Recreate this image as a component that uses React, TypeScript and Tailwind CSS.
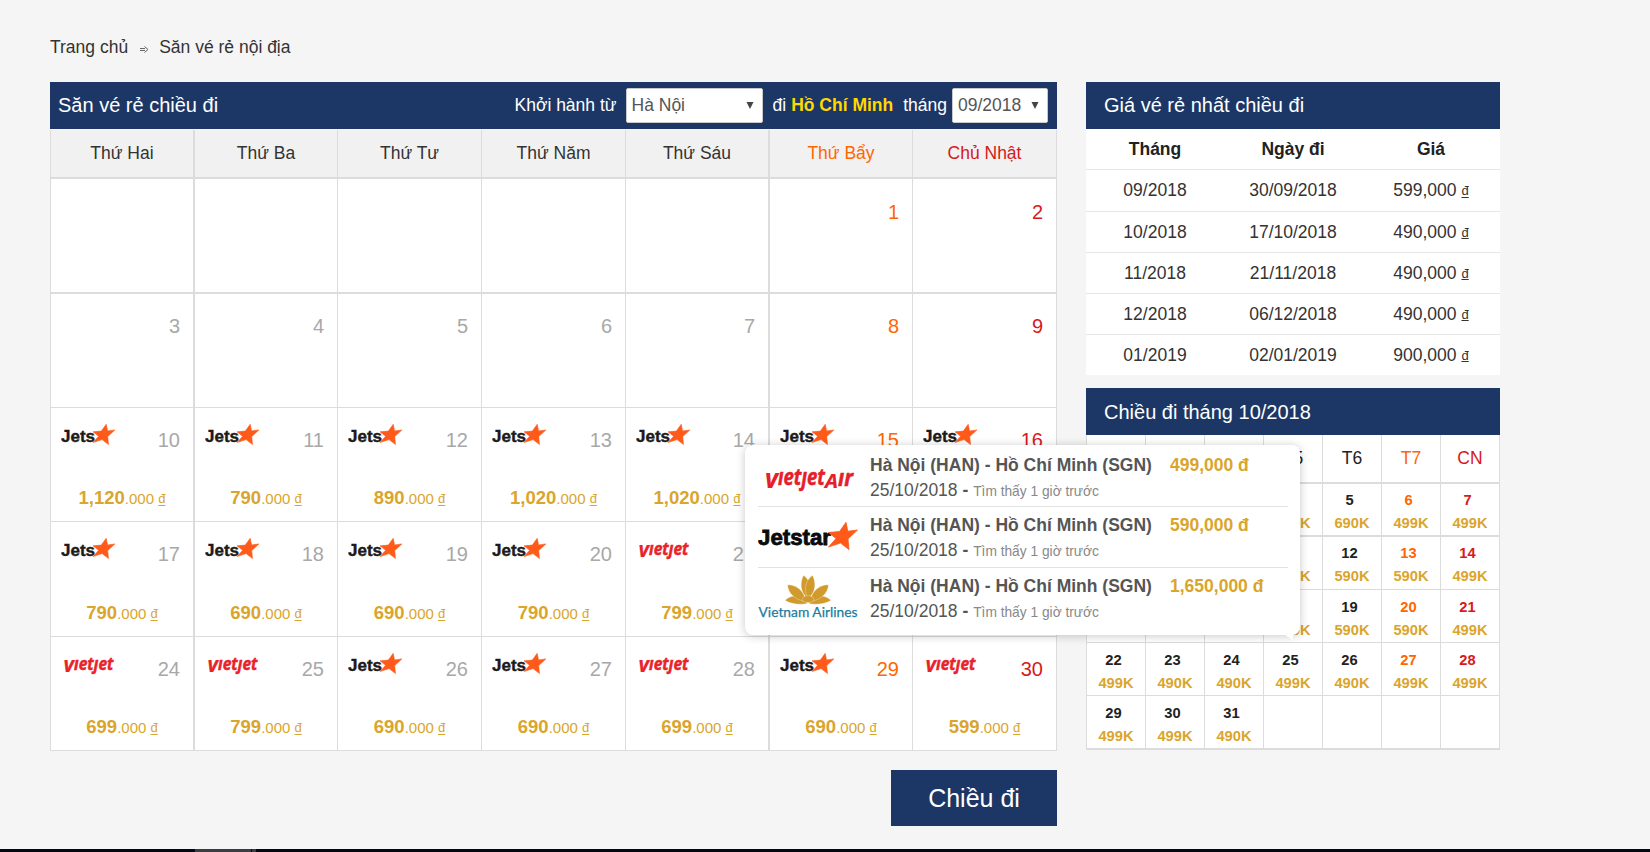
import React from "react";

type Airline = "jetstar" | "vietjet";
type Day = { day: number; airline?: Airline; price?: string } | null;

const weeks: Day[][] = [
  [null, null, null, null, null, { day: 1 }, { day: 2 }],
  [{ day: 3 }, { day: 4 }, { day: 5 }, { day: 6 }, { day: 7 }, { day: 8 }, { day: 9 }],
  [
    { day: 10, airline: "jetstar", price: "1,120" },
    { day: 11, airline: "jetstar", price: "790" },
    { day: 12, airline: "jetstar", price: "890" },
    { day: 13, airline: "jetstar", price: "1,020" },
    { day: 14, airline: "jetstar", price: "1,020" },
    { day: 15, airline: "jetstar" },
    { day: 16, airline: "jetstar" },
  ],
  [
    { day: 17, airline: "jetstar", price: "790" },
    { day: 18, airline: "jetstar", price: "690" },
    { day: 19, airline: "jetstar", price: "690" },
    { day: 20, airline: "jetstar", price: "790" },
    { day: 21, airline: "vietjet", price: "799" },
    null,
    null,
  ],
  [
    { day: 24, airline: "vietjet", price: "699" },
    { day: 25, airline: "vietjet", price: "799" },
    { day: 26, airline: "jetstar", price: "690" },
    { day: 27, airline: "jetstar", price: "690" },
    { day: 28, airline: "vietjet", price: "699" },
    { day: 29, airline: "jetstar", price: "690" },
    { day: 30, airline: "vietjet", price: "599" },
  ],
];

const weekdays = ["Thứ Hai", "Thứ Ba", "Thứ Tư", "Thứ Năm", "Thứ Sáu", "Thứ Bẩy", "Chủ Nhật"];
const rowHeights = ["h-[115px]", "h-[115px]", "h-[114px]", "h-[115px]", "h-[114px]"];

const cheapest = [
  ["09/2018", "30/09/2018", "599,000"],
  ["10/2018", "17/10/2018", "490,000"],
  ["11/2018", "21/11/2018", "490,000"],
  ["12/2018", "06/12/2018", "490,000"],
  ["01/2019", "02/01/2019", "900,000"],
];

const shortDays = ["T2", "T3", "T4", "T5", "T6", "T7", "CN"];
const nextMonth = [
  ["", "", "", "690K", "690K", "499K", "499K"],
  ["", "", "", "590K", "590K", "590K", "499K"],
  ["", "", "", "590K", "590K", "590K", "499K"],
  ["499K", "490K", "490K", "499K", "490K", "499K", "499K"],
  ["499K", "499K", "490K"],
];
const miniHeights = ["h-[53px]", "h-[54px]", "h-[53px]", "h-[53px]", "h-[53px]"];

const STAR = "88,15.3 89.8,24.2 99.5,23 90,31.8 91,42.6 82.5,36 70.5,40 78,31.5 70.5,25.5 81.5,24.5";

function JetsLogo() {
  return (
    <svg width="55" height="22" viewBox="0 0 55 22" className="block">
      <text x="0" y="17.7" textLength="34" lengthAdjust="spacingAndGlyphs" fontFamily="Liberation Sans" fontWeight="700" fontSize="16.5" fill="#1c1a1a" stroke="#1c1a1a" strokeWidth="0.4">Jets</text>
      <polygon points={STAR} transform="translate(32 0.3) scale(.755 .74) translate(-70.5 -15.3)" fill="#ff5a1a" stroke="#ff5a1a" strokeWidth="0.8" />
    </svg>
  );
}

function VietjetLogo() {
  return (
    <svg width="55" height="22" viewBox="0 0 55 22" className="block overflow-visible">
      <g fill="#e8232a" stroke="#e8232a" strokeWidth="0.5" fontFamily="Open Sans" fontWeight="700" fontStyle="italic">
        <text x="2.5" y="19" textLength="10.5" lengthAdjust="spacingAndGlyphs" fontSize="22" strokeWidth="0.2">v</text>
        <text x="13" y="17" textLength="39.5" lengthAdjust="spacingAndGlyphs" fontSize="18.5">ıetȷet</text>
      </g>
    </svg>
  );
}

function VietjetAirLogo() {
  return (
    <svg width="100" height="60" viewBox="0 0 100 60" className="block">
      <g fill="#e5202a" stroke="#e5202a" strokeWidth="0.5" fontFamily="Open Sans" fontWeight="700" fontStyle="italic">
        <text x="7" y="42.7" textLength="13" lengthAdjust="spacingAndGlyphs" fontSize="26" strokeWidth="0.2">v</text>
        <text x="20" y="40" textLength="47" lengthAdjust="spacingAndGlyphs" fontSize="22.5">ıetȷet</text>
        <text x="67" y="42.8" textLength="13" lengthAdjust="spacingAndGlyphs" fontSize="20" strokeWidth="0.2">A</text>
        <text x="80" y="41" textLength="15" lengthAdjust="spacingAndGlyphs" fontSize="23">ır</text>
      </g>
    </svg>
  );
}

function JetstarLogo() {
  return (
    <svg width="100" height="60" viewBox="0 0 100 60" className="block">
      <text x="0" y="38.3" textLength="73" lengthAdjust="spacingAndGlyphs" fontFamily="Liberation Sans" fontWeight="700" fontSize="22" fill="#0b0b0b" stroke="#0b0b0b" strokeWidth="0.8">Jetstar</text>
      <polygon points={STAR} fill="#ff5a1a" stroke="#ff5a1a" strokeWidth="0.8" />
    </svg>
  );
}

function VietnamAirlinesLogo() {
  return (
    <svg width="100" height="60" viewBox="0 0 100 60" className="block">
      <g fill="#d09a2c" stroke="#fff" strokeWidth="0.3" transform="translate(0 1.3)">
        <path d="M49 34.5c-8 1-17 0-22-3.5 5-5 14-6 20-1z" />
        <path d="M51 34.5c8 1 17 0 22-3.5-5-5-14-6-20-1z" />
        <path d="M46 32c-9-2-16-8-16.500-16.500 9 0 16 6 17.500 13.500z" />
        <path d="M54 32c9-2 16-8 16.500-16.500-9 0-16 6-17.500 13.500z" />
        <path d="M49.500 29c-7-6-8-15-4-23 7 5 9 14 5 22z" />
        <path d="M50.500 29c7-6 8-15 4-23-7 5-9 14-5 22z" />
        <path d="M44 30c2-5 10-5 12 0-1 4.500-11 4.500-12 0z" />
      </g>
      <text x="0.5" y="49.3" textLength="99" lengthAdjust="spacingAndGlyphs" fontFamily="Lato" fontSize="14" fill="#1b7d9e" stroke="#1b7d9e" strokeWidth="0.25">Vietnam Airlines</text>
    </svg>
  );
}

function Dong() {
  return <span className="align-[1.5px] text-[13px] leading-none underline decoration-1 underline-offset-[1.5px]">đ</span>;
}

function Select({ value, className }: { value: string; className: string }) {
  return (
    <div className={`flex h-[35px] items-center justify-between rounded-[2px] border border-[#c9c9c9] bg-white pl-[5px] text-[#555] ${className}`}>
      <span>{value}</span>
      <svg width="8" height="7" viewBox="0 0 8 7" className="block">
        <path d="M.5 0h7L4 7z" fill="#444" />
      </svg>
    </div>
  );
}

function dayColor(col: number, base: string) {
  if (col === 5) return "text-[#ff6600]";
  if (col === 6) return "text-[#d71920]";
  return base;
}

const leftEdge = (col: number) => (col === 1 || col === 5 ? "border-l-2" : "border-l");
const mainCols = "grid grid-cols-[143px_144px_144px_144px_143px_144px_144px] border-r border-[#dcdcdc]";

function FareCalendar() {
  return (
    <section className="w-[1007px]">
      <div className="flex h-[47px] items-center bg-[#1c3765] pl-2 pr-[9px] text-white">
        <h2 className="flex-1 pb-px text-[20px]">Săn vé rẻ chiều đi</h2>
        <span className="mr-[9px]">Khởi hành từ</span>
        <Select value="Hà Nội" className="w-[137px] pr-[8px]" />
        <span className="ml-[10px] mr-[5px]">đi</span>
        <b className="mr-[10px] text-[#ffd800]">Hồ Chí Minh</b>
        <span className="mr-[5px]">tháng</span>
        <Select value="09/2018" className="w-[96px] pr-[8px]" />
      </div>
      <div className="mt-px">
        <div className={`${mainCols} h-[47px]`}>
          {weekdays.map((name, i) => (
            <div key={name} className={`flex items-center justify-center border-[#dcdcdc] bg-[#f1f1f1] ${leftEdge(i)} ${dayColor(i, "text-[#333]")}`}>
              {name}
            </div>
          ))}
        </div>
        {weeks.map((week, r) => (
          <div key={r} className={`${mainCols} ${rowHeights[r]}`}>
            {week.map((cell, i) => (
              <div key={i} className={`flex flex-col justify-between border-[#dcdcdc] bg-white ${leftEdge(i)} ${r < 2 ? "border-t-2" : "border-t"} ${r === 0 ? "pt-px" : ""}`}>
                {cell && (
                  <div className="flex items-start justify-between pl-[10px] pr-[13px]">
                    <div className="pt-4">
                      {cell.airline === "jetstar" && <JetsLogo />}
                      {cell.airline === "vietjet" && <VietjetLogo />}
                    </div>
                    <span className={`pt-[20px] text-[20px] leading-6 ${dayColor(i, "text-[#a8a8a8]")}`}>{cell.day}</span>
                  </div>
                )}
                {cell?.price && (
                  <div className="mb-[8px] text-center text-[15px] leading-7 text-[#daa52c]">
                    <b className="text-[18.5px]">{cell.price}</b>.000 <Dong />
                  </div>
                )}
              </div>
            ))}
          </div>
        ))}
        <div className="h-px bg-[#dcdcdc]" />
      </div>
      <div className="mt-[19px] flex justify-end">
        <button className="h-14 w-[166px] bg-[#1c3765] pt-px text-[25px] text-white">Chiều đi</button>
      </div>
    </section>
  );
}

function CheapestTable() {
  return (
    <section className="bg-white">
      <h2 className="flex h-[47px] items-center bg-[#1c3765] pb-px pl-[18px] text-[20px] text-white">Giá vé rẻ nhất chiều đi</h2>
      <div className="grid h-10 grid-cols-3 items-center text-center font-bold text-[#222]">
        <span>Tháng</span>
        <span>Ngày đi</span>
        <span>Giá</span>
      </div>
      {cheapest.map(([month, date, price], i) => (
        <div key={month} className={`grid grid-cols-3 items-center border-t border-[#e6e6e6] text-center text-[#333] ${i === 0 ? "h-[42px]" : "h-[41px]"}`}>
          <span>{month}</span>
          <span>{date}</span>
          <span>
            {price} <Dong />
          </span>
        </div>
      ))}
    </section>
  );
}

function NextMonth() {
  return (
    <section className="mt-[13px]">
      <h2 className="flex h-[47px] items-center bg-[#1c3765] pl-[18px] text-[20px] text-white">Chiều đi tháng 10/2018</h2>
      <div className="grid h-[47px] grid-cols-7 border-r border-[#dcdcdc] bg-white">
        {shortDays.map((d, i) => (
          <div key={d} className={`flex items-center justify-center border-l border-[#dcdcdc] ${dayColor(i, "text-[#222]")}`}>
            {i > 2 && d}
          </div>
        ))}
      </div>
      {nextMonth.map((row, r) => (
        <div key={r} className={`grid grid-cols-7 border-r border-[#dcdcdc] bg-white ${miniHeights[r]}`}>
          {shortDays.map((_, i) => (
            <div key={i} className={`flex flex-col border-l border-[#dcdcdc] text-center text-[14.7px] font-bold leading-[23px] ${r < 2 ? "border-t-2 pt-[5px]" : "border-t pt-[6px]"}`}>
              {row[i] && (
                <>
                  <span className={`pr-[5px] ${dayColor(i, "text-[#222]")}`}>{r * 7 + i + 1}</span>
                  <span className="text-[#daa52c]">{row[i]}</span>
                </>
              )}
            </div>
          ))}
        </div>
      ))}
      <div className="h-0.5 bg-[#dcdcdc]" />
    </section>
  );
}

const offers = [
  { logo: <VietjetAirLogo />, price: "499,000 đ" },
  { logo: <JetstarLogo />, price: "590,000 đ" },
  { logo: <VietnamAirlinesLogo />, price: "1,650,000 đ" },
];

function FarePopup() {
  return (
    <div className="absolute left-[745px] top-[445px] h-[190px] w-[555px] rounded-lg bg-white pl-[13px] pr-[12px] shadow-[0_1px_10px_rgba(0,0,0,0.22)]">
      {offers.map((o, i) => (
        <div key={i} className={`flex h-[61px] ${i ? "border-t border-[#e2e2e2]" : ""}`}>
          <div className="w-[112px]">{o.logo}</div>
          <div className={`leading-[25px] text-[#555] ${i ? "pt-[6px]" : "pt-[8px]"}`}>
            <div className="flex font-bold">
              <span className="w-[300px]">Hà Nội (HAN) - Hồ Chí Minh (SGN)</span>
              <span className="text-[#daa52c]">{o.price}</span>
            </div>
            <div>
              25/10/2018 <b>-</b> <span className="text-[13.75px] text-[#888]">Tìm thấy 1 giờ trước</span>
            </div>
          </div>
        </div>
      ))}
      <svg width="8" height="5" viewBox="0 0 8 5" className="absolute right-[7px] top-full block">
        <path d="M0 0h8v5z" fill="#fff" />
      </svg>
    </div>
  );
}

export default function App() {
  return (
    <div className="relative flex h-[852px] w-[1650px] flex-col overflow-hidden bg-[#f5f5f5] font-['Liberation_Sans',Arial,sans-serif] text-[17.5px] text-[#333]">
      <nav className="flex h-[82px] items-center pb-[1px] pl-[50px]">
        <div className="flex h-[24px] items-center pt-[14px]">
          <span>Trang chủ</span>
          <svg width="9" height="7" viewBox="0 0 9 7" className="ml-[12px] mr-[10px] mt-1" fill="none" stroke="#666" strokeWidth="1">
            <path d="M0 2.500h5M0 4.500h5M4.500 .5L8 3.500 4.500 6.500" />
          </svg>
          <span>Săn vé rẻ nội địa</span>
        </div>
      </nav>
      <main className="flex flex-1 items-start gap-[29px] pl-[50px]">
        <FareCalendar />
        <aside className="w-[414px]">
          <CheapestTable />
          <NextMonth />
        </aside>
      </main>
      <footer className="flex h-[3px] bg-[#030814] pl-[195px]">
        <div className="w-[56px] bg-[#3b3d42]" />
        <div className="ml-px w-1 bg-[#3b3d42]" />
      </footer>
      <FarePopup />
    </div>
  );
}
